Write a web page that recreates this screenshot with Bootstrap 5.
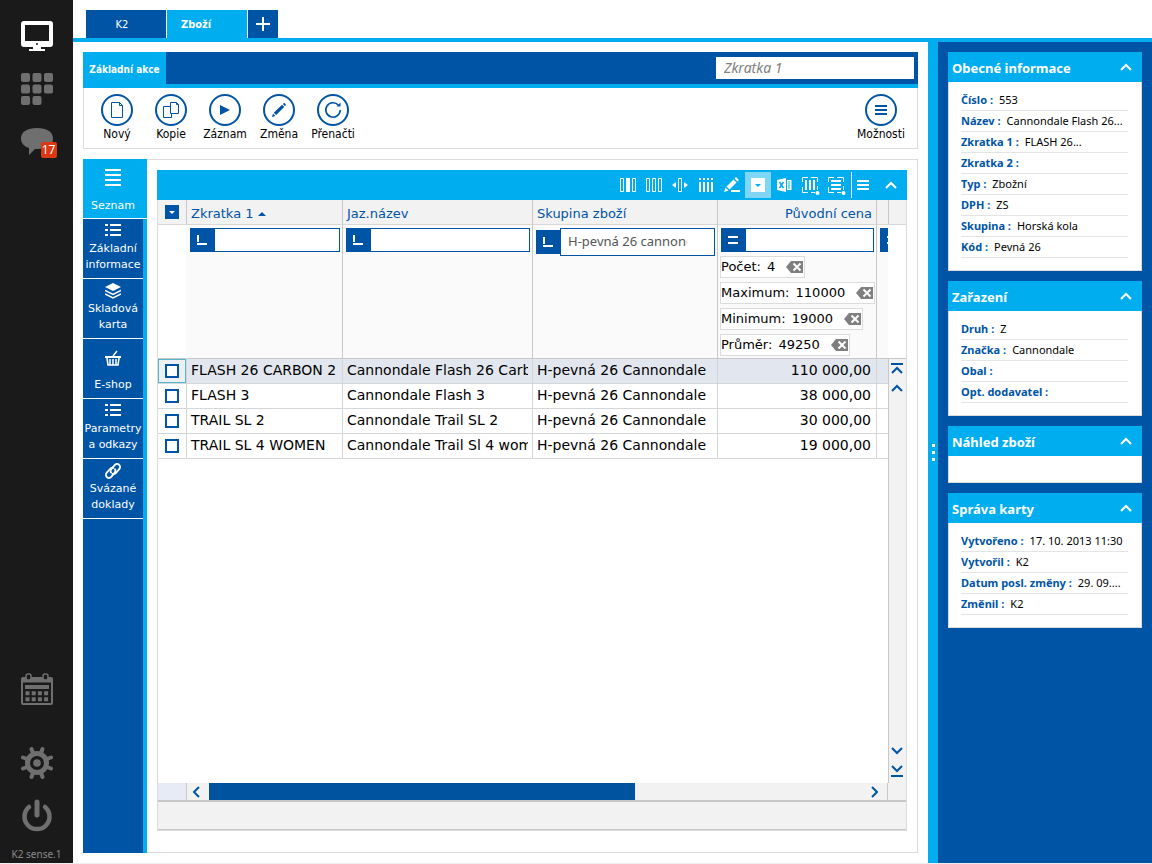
<!DOCTYPE html>
<html lang="cs">
<head>
<meta charset="utf-8">
<meta name="viewport" content="width=device-width, initial-scale=1">
<title>K2 – Zboží</title>
<link href="https://cdn.jsdelivr.net/npm/bootstrap@5.3.0/dist/css/bootstrap.min.css" rel="stylesheet">
<style>
:root{--navy:#0054a6;--sky:#00adef;--rule:#dcdcdc;--pale:#f2f2f2;
  --verdana:Verdana,"DejaVu Sans",sans-serif;--tahoma:"DejaVu Sans Condensed",sans-serif;--segoe:"Noto Sans",sans-serif}
body{font-family:var(--verdana);font-size:13px;color:#000;line-height:16px;padding-bottom:1px;background:#eee}
svg{display:block}
button{border:0;background:none;padding:0;color:inherit;border-radius:0}
a{text-decoration:none;color:inherit}
.bg-navy{background:var(--navy)}
.bg-sky{background:var(--sky)}
.shrinkable{min-width:0;min-height:0}
.rail{width:73px;background:#1a1a1a;color:#6f6f6f;padding:20px 0 1px}
.rail .note{font:10px/16px var(--segoe);color:#8a8a8a;margin-top:14px}
.rail .settings{margin:42px 0 20px}
.count{right:-4px;bottom:-2px;width:16px;height:16px;background:#dc3912;color:#fff;font:12px/16px var(--segoe);border-radius:2px;text-align:center}
.tabs{height:42px;padding:10px 0 0 13px;border-bottom:4px solid var(--sky);gap:1px;flex:none}
.tabs a,.tabs button{font:11px/30px var(--tahoma);color:#fff;background:var(--navy);width:80px;height:28px}
.tabs a{padding-right:8px}
.tabs a.active{background:var(--sky);font-weight:bold;padding-left:14px}
.tabs button{width:30px}
.work{padding:10px}
.actions-head{height:36px;border-bottom:4px solid var(--sky)}
.actions-head a{background:var(--sky);color:#fff;font:bold 10px/36px var(--tahoma);height:36px;width:83px;text-align:center}
.find{width:198px;height:22px;border:0;font:italic 14px/20px var(--segoe);padding:0 8px 2px;margin:5px 4px 0 0;border-radius:0}
.find::placeholder{color:#808080}
.actions{border:1px solid var(--rule);border-top:0;padding:6px 9px 6px 6px;margin-bottom:10px}
.actions button{width:54px;font:12px/16px var(--tahoma)}
.ring{width:32px;height:32px;border:2px solid var(--navy);border-radius:50%;color:var(--navy)}
.side{width:64px;border-right:4px solid var(--sky);background:var(--navy)}
.side a{height:60px;border-bottom:1px solid #fff;color:#fff;font-size:11px;line-height:16px;padding:4px 0 5px;text-align:center}
.side a.active{background:var(--sky);margin-right:-4px;padding:10px 4px 4px 0}
.pane{border:1px solid var(--rule);border-left:0;padding:10px 10px 21px}
.tools{height:30px;color:#fff}
.tools button{width:26px;height:26px}
.tools .on{background:#7fd6f7}
.tools .last{border-left:1px solid #fff;width:22px;margin-left:2px}
.tools .fold{width:34px;padding-left:2px}
.gridbox{border:1px solid var(--rule);border-top:0}
table.list{table-layout:fixed;width:100%;border-collapse:separate;border-spacing:0;white-space:nowrap;color:#000}
.list th,.list td{overflow:hidden;border-right:1px solid #d4d7da;border-bottom:1px solid #d4d7da;padding:0 4px}
.list tr>:last-child{border-right:0}
.list thead th{height:25px;background:var(--pale);color:var(--navy);font-weight:normal;border-color:#c8c8c8;border-bottom-color:#d8d8d8;padding-top:3px}
.list thead th:first-child{padding-top:0}
.list .filters td{height:134px;vertical-align:top;background:#fafafa;padding:3px 2px 0 3px;border-color:#c8c8c8}
.list .filters td:first-child{background:#fff;border-right-color:#fafafa}
.list tbody.data td{height:25px;font-size:14px;line-height:22px;padding-bottom:2px}
.list td.num{text-align:right;padding-right:5px}
.list tr.sel td{background:#e2e7ef}
.list tbody.data td:first-child{padding:0}
.list tr.sel td.pick{background:#eceff3;box-shadow:inset 0 0 0 1px #55b6cc}
.tick{appearance:none;display:block;width:14px;height:14px;border:2px solid var(--navy);background:#fff;margin:0 auto}
.menu{width:14px;height:14px;background:var(--navy);color:#fff;margin:0 auto}
.op{width:24px;height:24px;background:var(--navy);color:#fff;flex:none}
.fbox{flex:1;min-width:0;height:24px;border:1px solid var(--navy);border-radius:0;padding:0 6px;background:#fff}
.fbox.tall{height:28px;font:13px/24px var(--segoe);color:#555;padding:0 27px 2px 7px}
.sum{width:fit-content;height:22px;background:#fff;border:1px solid var(--rule);gap:11px;padding:0 1px 0 0;margin:4px 0 0 -1px;line-height:20px}
.sum b{font-weight:normal;margin-left:2px}
.vbar{width:18px;flex:none;color:var(--navy)}
.vhead{height:25px;background:var(--pale);border-left:1px solid #c8c8c8;border-bottom:1px solid #d8d8d8}
.vgap{height:133px}
.vtrack{background:var(--pale);border-left:1px solid #c8c8c8;border-top:1px solid #c8c8c8;padding:4px 2px 6px 0}
.hbar{height:17px;background:var(--pale);color:var(--navy)}
.hbar .corner{width:29px;background:#e6ebf5;border-right:1px solid #c8c8c8}
.hbar button{width:22px;padding-right:4px}
.hbar .endcap{width:19px;border-left:1px solid #c8c8c8}
.thumb{width:65%;height:100%;background:#00549f}
.foot{height:30px;background:var(--pale);border-top:2px solid #c8c8c8;border-bottom:1px solid #c8c8c8}
.split{width:10px;color:#fff}
.info{width:214px;padding:10px}
.info section{background:#fff;margin-bottom:10px;border:1px solid var(--rule);border-top:0}
.info h2{font:bold 13px/28px var(--segoe);height:30px;color:#fff;background:var(--sky);margin:0 -1px;padding:2px 10px 0 4px}
.info h2 svg{margin-top:-2px}
.info dl{margin:0;padding:8px 13px 12px 12px;font:11px/20px var(--segoe)}
.info dl div{border-bottom:1px solid #e4e4e4;white-space:nowrap;overflow:hidden;text-overflow:ellipsis;height:21px}
.info dt{display:inline;font-weight:bold;color:var(--navy);margin-right:6px}
.info dd{display:inline;margin:0}
.info .blank{height:26px}
</style>
</head>
<body class="d-flex vh-100 overflow-hidden">

<nav class="rail d-flex flex-column align-items-center flex-shrink-0" aria-label="Hlavní">
  <a href="#" aria-label="Plocha" class="text-white"><svg width="32" height="32" viewBox="0 0 32 32" fill="currentColor"><path fill-rule="evenodd" d="M3 1h26a3 3 0 0 1 3 3v20a3 3 0 0 1-3 3H3a3 3 0 0 1-3-3V4a3 3 0 0 1 3-3zM4 5v16h24V5z"/><path d="M12 27h8v2h4v2H8v-2h4z"/><circle cx="16" cy="24" r="1" fill="#1a1a1a"/></svg></a>
  <a href="#" aria-label="Moduly" class="mt-3 pt-1"><svg width="32" height="33" viewBox="0 0 32 33" fill="currentColor"><rect x="0" y="1" width="9" height="9" rx="2"/><rect x="11.500" y="1" width="9" height="9" rx="2"/><rect x="23" y="1" width="9" height="9" rx="2"/><rect x="0" y="12.500" width="9" height="9" rx="2"/><rect x="11.500" y="12.500" width="9" height="9" rx="2"/><rect x="23" y="12.500" width="9" height="9" rx="2"/><rect x="0" y="24" width="9" height="9" rx="2"/><rect x="11.500" y="24" width="9" height="9" rx="2"/></svg></a>
  <a href="#" aria-label="Zprávy" class="mt-3 pt-1 position-relative"><svg width="32" height="31" viewBox="0 0 32 31" fill="currentColor"><path d="M16 3c9.500 0 16 3.500 16 10.500S25.500 24 16 24h-2l-6 6v-7C3 21.500 0 18 0 13.500 0 6.500 6.500 3 16 3z"/></svg><span class="count position-absolute">17</span></a>
  <a href="#" aria-label="Kalendář" class="mt-auto"><svg width="32" height="32" viewBox="0 0 32 32" fill="none" stroke="currentColor"><rect x="1" y="5" width="30" height="26" rx="1" stroke-width="2"/><path d="M1 7h30" stroke-width="5"/><rect x="5" y="1" width="5" height="6" rx="2" fill="#1a1a1a" stroke-width="1.500"/><rect x="22" y="1" width="5" height="6" rx="2" fill="#1a1a1a" stroke-width="1.500"/><path d="M4 14h24" stroke-width="4"/><path d="M4.500 20.200h24M4.500 26.200h24" stroke-width="4" stroke-dasharray="4 2.200"/></svg></a>
  <a href="#" aria-label="Nastavení" class="settings"><svg width="32" height="32" viewBox="0 0 32 32" fill="none" stroke="currentColor"><circle cx="16" cy="16" r="9.500" stroke-width="5"/><circle cx="16" cy="16" r="3.800" fill="currentColor" stroke="none"/><g stroke-width="4" stroke-linecap="round"><path d="M12 6l-1.500-4M20 6l1.500-4M12 26l-1.500 4M20 26l1.500 4M6 12l-4-1.500M6 20l-4 1.500M26 12l4-1.500M26 20l4 1.500"/></g></svg></a>
  <a href="#" aria-label="Odhlásit"><svg width="32" height="33" viewBox="0 0 32 33" fill="none" stroke="currentColor" stroke-width="4.500" stroke-linecap="round"><path d="M8 8a12.500 12.500 0 1 0 16 0"/><path d="M16 3v13" stroke-width="5"/></svg></a>
  <span class="note">K2 sense.1</span>
</nav>

<div class="d-flex flex-column flex-grow-1 bg-white shrinkable">
  <header class="tabs d-flex">
    <a href="#" class="text-center">K2</a>
    <a href="#" class="active">Zboží</a>
    <button type="button" class="d-flex align-items-center justify-content-center" aria-label="Nová záložka"><svg width="14" height="14" stroke="#fff" stroke-width="2"><path d="M7 0v14M0 7h14"/></svg></button>
  </header>

  <div class="d-flex flex-grow-1 shrinkable">
    <main class="work d-flex flex-column flex-grow-1 shrinkable">
      <div class="actions-head bg-navy d-flex justify-content-between">
        <a href="#">Základní akce</a>
        <input class="find" type="search" placeholder="Zkratka 1" aria-label="Zkratka 1">
      </div>
      <div class="actions d-flex">
        <button type="button"><span class="ring d-flex align-items-center justify-content-center mx-auto"><svg width="14" height="18" fill="none" stroke="currentColor"><path d="M1.500 1.500h8l3 3v12h-11zM9.500 1.500v3h3"/></svg></span>Nový</button>
        <button type="button"><span class="ring d-flex align-items-center justify-content-center mx-auto"><svg width="18" height="18" fill="none" stroke="currentColor"><path d="M8.500 1.500h6l2 2v9h-8zM14.500 1.500v2h2M8.500 5.500h-7v11h8v-4"/></svg></span>Kopie</button>
        <button type="button"><span class="ring d-flex align-items-center justify-content-center mx-auto"><svg width="10" height="12" fill="currentColor"><path d="M0 1l10 5-10 5z"/></svg></span>Záznam</button>
        <button type="button"><span class="ring d-flex align-items-center justify-content-center mx-auto"><svg width="16" height="16" fill="currentColor"><path d="M1 15l1-3.500L4.500 14zM2.800 10.700L11 2.800 13.200 5 5.200 13zM11.800 2l1.500-1.200L15 2.700 14 4.200z"/></svg></span>Změna</button>
        <button type="button"><span class="ring d-flex align-items-center justify-content-center mx-auto"><svg width="18" height="18" fill="none" stroke="currentColor" stroke-width="1.600"><path d="M14.500 4.300A7.200 7.200 0 1 0 16.200 9"/><path d="M12.500 5.500h4v-4z" fill="currentColor" stroke="none"/></svg></span>Přenačti</button>
        <button type="button" class="ms-auto"><span class="ring d-flex align-items-center justify-content-center mx-auto"><svg width="12" height="12" stroke="currentColor" stroke-width="2"><path d="M0 2h12M0 6h12M0 10h12"/></svg></span>Možnosti</button>
      </div>

      <div class="d-flex flex-grow-1 shrinkable">
        <nav class="side flex-shrink-0" aria-label="Záložky knihy">
          <a href="#" class="active d-flex flex-column align-items-center justify-content-between"><svg width="16" height="17" stroke="#fff" stroke-width="2"><path d="M0 1h16M0 6h16M0 11h16M0 16h16"/></svg>Seznam</a>
          <a href="#" class="d-flex flex-column align-items-center justify-content-between"><svg width="16" height="14" stroke="#fff" stroke-width="2"><path d="M0 2h3M5 2h11M0 7h3M5 7h11M0 12h3M5 12h11"/></svg><span>Základní<br>informace</span></a>
          <a href="#" class="d-flex flex-column align-items-center justify-content-between"><svg width="16" height="16" fill="#fff"><path d="M8 0l8 4-8 4-8-4z"/><path d="M0 7.500l8 4 8-4M0 11l8 4 8-4" fill="none" stroke="#fff" stroke-width="1.500"/></svg><span>Skladová<br>karta</span></a>
          <a href="#" class="d-flex flex-column align-items-center justify-content-between pt-2"><svg width="16" height="22" fill="none" stroke="#fff"><path d="M0 10h16" stroke-width="2"/><path d="M2 11l1 7h10l1-7" stroke-width="1.600"/><path d="M5 12v6M8 12v6M11 12v6" stroke-width="1.500"/><path d="M8 9l4-5" stroke-width="1.500"/></svg>E-shop</a>
          <a href="#" class="d-flex flex-column align-items-center justify-content-between"><svg width="16" height="14" stroke="#fff" stroke-width="2"><path d="M0 2h3M5 2h11M0 7h3M5 7h11M0 12h3M5 12h11"/></svg><span>Parametry<br>a odkazy</span></a>
          <a href="#" class="d-flex flex-column align-items-center justify-content-between"><svg width="16" height="16" fill="none" stroke="#fff" stroke-width="1.800" stroke-linecap="round"><path d="M6 9.500c-.8-1.300-.5-2.500.5-3.700L9.500 2.300c1.300-1.500 3.200-1.700 4.500-.6s1.500 3 .2 4.500L11 10c-1 1.200-2.200 1.400-3.500.8"/><path d="M10 6.200c.8 1.300.5 2.500-.5 3.700l-3 3.700c-1.300 1.500-3.200 1.700-4.500.6s-1.500-3-.2-4.500L5 6c1-1.200 2-1.500 3-1"/></svg><span>Svázané<br>doklady</span></a>
        </nav>

        <div class="pane flex-grow-1 d-flex flex-column shrinkable">
          <div class="tools bg-sky d-flex align-items-center justify-content-end" role="toolbar">
            <button type="button" aria-label="Šířka sloupce" class="d-flex align-items-center justify-content-center"><svg width="16" height="14" fill="none" stroke="#fff"><path d="M.5.5h3v13h-3zM12.500.5h3v13h-3z"/><path d="M6 0h4v14H6z" fill="#fff" stroke="none"/></svg></button>
            <button type="button" aria-label="Sloupce" class="d-flex align-items-center justify-content-center"><svg width="16" height="14" fill="none" stroke="#fff"><path d="M.5.5h3v13h-3zM6.500.5h3v13h-3zM12.500.5h3v13h-3z"/></svg></button>
            <button type="button" aria-label="Přizpůsobit" class="d-flex align-items-center justify-content-center"><svg width="16" height="14" fill="#fff"><path d="M6.500.5h3v13h-3z" fill="none" stroke="#fff"/><path d="M4 4v6L0 7zM12 4v6l4-3z"/></svg></button>
            <button type="button" aria-label="Součty" class="d-flex align-items-center justify-content-center"><svg width="16" height="14" stroke="#fff" stroke-width="2"><path d="M2 0v2M6 0v2M10 0v2M14 0v2M2 4v10M6 4v10M10 4v10M14 4v10"/></svg></button>
            <button type="button" aria-label="Upravit" class="d-flex align-items-center justify-content-center"><svg width="16" height="16" fill="#fff"><path d="M0 15l1.500-4.500 3 3zM2.500 9.500l7-7 3 3-7 7zM10.500 1.500L12 0l3 3-1.500 1.500zM7 13h9v2H7z"/></svg></button>
            <button type="button" aria-label="Filtr" class="on d-flex align-items-center justify-content-center"><svg width="14" height="14"><path d="M0 0h14v14H0z" fill="#fff"/><path d="M4 6h6L7 9z" fill="#00adef"/></svg></button>
            <button type="button" aria-label="Excel" class="d-flex align-items-center justify-content-center"><svg width="15" height="14" fill="#fff"><path d="M0 2l9-2v14l-9-2zM10 2h4.500v10H10z"/><path d="M2.500 4l4 6M6.500 4l-4 6" stroke="#00adef" stroke-width="1.500"/><path d="M12 3v8" stroke="#00adef"/></svg></button>
            <button type="button" aria-label="Uložit sloupce" class="d-flex align-items-center justify-content-center"><svg width="20" height="22" fill="none" stroke="#fff"><path d="M2.500 8V3.500H8M11 3.500h6.500V8M2.500 13v5.500H8M11 18.500h4M17.500 12v4"/><path d="M6 6v10M10 6v10M14 6v10" stroke-width="2"/><circle cx="17.500" cy="19" r="2" fill="#fff" stroke="none"/></svg></button>
            <button type="button" aria-label="Uložit řádky" class="d-flex align-items-center justify-content-center"><svg width="20" height="22" fill="none" stroke="#fff"><path d="M2.500 8V3.500H8M11 3.500h6.500V8M2.500 13v5.500H8M11 18.500h4M17.500 12v4"/><path d="M5 7h10M5 11h10M5 15h10" stroke-width="2"/><circle cx="17.500" cy="19" r="2" fill="#fff" stroke="none"/></svg></button>
            <button type="button" aria-label="Nabídka" class="last d-flex align-items-center justify-content-center"><svg width="14" height="12" stroke="#fff" stroke-width="2"><path d="M1 2h12M1 6h12M1 10h12"/></svg></button>
            <button type="button" aria-label="Sbalit" class="fold d-flex align-items-center justify-content-center"><svg width="12" height="8" fill="none" stroke="#fff" stroke-width="2"><path d="M1 7l5-5 5 5"/></svg></button>
          </div>

          <div class="gridbox flex-grow-1 d-flex flex-column">
            <div class="d-flex flex-grow-1">
              <div class="flex-grow-1 shrinkable">
                <table class="list">
                  <colgroup><col style="width:29px"><col style="width:156px"><col style="width:190px"><col style="width:185px"><col style="width:159px"><col></colgroup>
                  <thead>
                    <tr><th><button type="button" class="menu d-flex align-items-center justify-content-center" aria-label="Výběr"><svg width="6" height="3" fill="#fff"><path d="M0 0h6L3 3z"/></svg></button></th>
                    <th>Zkratka 1 <svg class="d-inline-block align-middle" width="8" height="5" fill="currentColor"><path d="M4 0l4 4H0z"/></svg></th><th>Jaz.název</th><th>Skupina zboží</th><th class="text-end">Původní cena</th><th></th></tr>
                  </thead>
                  <tbody>
                    <tr class="filters">
                      <td></td>
                      <td><div class="d-flex"><button type="button" class="op" aria-label="Začíná na"><svg width="24" height="24" fill="none" stroke="#fff" stroke-width="2"><path d="M8 7v7M7 16h10"/></svg></button><input class="fbox" aria-label="Filtr Zkratka 1"></div></td>
                      <td><div class="d-flex"><button type="button" class="op" aria-label="Začíná na"><svg width="24" height="24" fill="none" stroke="#fff" stroke-width="2"><path d="M8 7v7M7 16h10"/></svg></button><input class="fbox" aria-label="Filtr Jaz.název"></div></td>
                      <td><div class="d-flex align-items-center"><button type="button" class="op" aria-label="Začíná na"><svg width="24" height="24" fill="none" stroke="#fff" stroke-width="2"><path d="M8 7v7M7 16h10"/></svg></button><input class="fbox tall" aria-label="Filtr Skupina zboží" value="H-pevná 26 cannondale"></div></td>
                      <td><div class="d-flex"><button type="button" class="op" aria-label="Rovná se"><svg width="24" height="24" stroke="#fff" stroke-width="2"><path d="M7 9h10M7 15h10"/></svg></button><input class="fbox" aria-label="Filtr Původní cena"></div>
                        <div class="sum d-flex align-items-center"><span>Počet: <b>4</b></span><button type="button" aria-label="Zrušit"><svg width="17" height="12" viewBox="0 0 17 12"><path d="M5 0h12v12H5L0 6z" fill="#7f7f7f"/><path d="M7.500 2.500l7 7M14.500 2.500l-7 7" stroke="#fff" stroke-width="2"/></svg></button></div>
                        <div class="sum d-flex align-items-center"><span>Maximum: <b>110000</b></span><button type="button" aria-label="Zrušit"><svg width="17" height="12" viewBox="0 0 17 12"><path d="M5 0h12v12H5L0 6z" fill="#7f7f7f"/><path d="M7.500 2.500l7 7M14.500 2.500l-7 7" stroke="#fff" stroke-width="2"/></svg></button></div>
                        <div class="sum d-flex align-items-center"><span>Minimum: <b>19000</b></span><button type="button" aria-label="Zrušit"><svg width="17" height="12" viewBox="0 0 17 12"><path d="M5 0h12v12H5L0 6z" fill="#7f7f7f"/><path d="M7.500 2.500l7 7M14.500 2.500l-7 7" stroke="#fff" stroke-width="2"/></svg></button></div>
                        <div class="sum d-flex align-items-center"><span>Průměr: <b>49250</b></span><button type="button" aria-label="Zrušit"><svg width="17" height="12" viewBox="0 0 17 12"><path d="M5 0h12v12H5L0 6z" fill="#7f7f7f"/><path d="M7.500 2.500l7 7M14.500 2.500l-7 7" stroke="#fff" stroke-width="2"/></svg></button></div></td>
                      <td><button type="button" class="op d-block" aria-label="Rovná se"><svg width="24" height="24" stroke="#fff" stroke-width="2"><path d="M7 9h10M7 15h10"/></svg></button></td>
                    </tr>
                  </tbody>
                  <tbody class="data">
                    <tr class="sel"><td class="pick"><input type="checkbox" class="tick" aria-label="Označit FLASH 26"></td><td>FLASH 26 CARBON 2</td><td><div class="overflow-hidden">Cannondale Flash 26 Carbon</div></td><td>H-pevná 26 Cannondale</td><td class="num">110 000,00</td><td></td></tr>
                    <tr><td><input type="checkbox" class="tick" aria-label="Označit FLASH 3"></td><td>FLASH 3</td><td>Cannondale Flash 3</td><td>H-pevná 26 Cannondale</td><td class="num">38 000,00</td><td></td></tr>
                    <tr><td><input type="checkbox" class="tick" aria-label="Označit TRAIL SL 2"></td><td>TRAIL SL 2</td><td>Cannondale Trail SL 2</td><td>H-pevná 26 Cannondale</td><td class="num">30 000,00</td><td></td></tr>
                    <tr><td><input type="checkbox" class="tick" aria-label="Označit TRAIL SL 4"></td><td>TRAIL SL 4 WOMEN</td><td><div class="overflow-hidden">Cannondale Trail Sl 4 women</div></td><td>H-pevná 26 Cannondale</td><td class="num">19 000,00</td><td></td></tr>
                  </tbody>
                </table>
              </div>
              <div class="vbar d-flex flex-column">
                <div class="vhead"></div><div class="vgap"></div>
                <div class="vtrack flex-grow-1 d-flex flex-column align-items-center">
                  <button type="button" class="mb-2" aria-label="První"><svg width="12" height="12" fill="none" stroke="currentColor" stroke-width="2"><path d="M0 1h12M1 10l5-5 5 5"/></svg></button>
                  <button type="button" aria-label="Předchozí"><svg width="12" height="12" fill="none" stroke="currentColor" stroke-width="2"><path d="M1 8l5-5 5 5"/></svg></button>
                  <button type="button" class="mt-auto mb-2" aria-label="Další"><svg width="12" height="10" fill="none" stroke="currentColor" stroke-width="2"><path d="M1 1l5 5 5-5"/></svg></button>
                  <button type="button" aria-label="Poslední"><svg width="12" height="12" fill="none" stroke="currentColor" stroke-width="2"><path d="M1 1l5 5 5-5M0 11h12"/></svg></button>
                </div>
              </div>
            </div>
            <div class="hbar d-flex">
              <div class="corner"></div>
              <button type="button" class="d-flex align-items-center justify-content-center" aria-label="Vlevo"><svg width="8" height="12" fill="none" stroke="currentColor" stroke-width="2"><path d="M7 1L2 6l5 5"/></svg></button>
              <div class="flex-grow-1"><div class="thumb"></div></div>
              <button type="button" class="d-flex align-items-center justify-content-center" aria-label="Vpravo"><svg width="8" height="12" fill="none" stroke="currentColor" stroke-width="2"><path d="M2 1l5 5-5 5"/></svg></button>
              <div class="endcap"></div>
            </div>
            <div class="foot"></div>
          </div>
        </div>
      </div>
    </main>

    <div class="split bg-sky d-flex align-items-center justify-content-center flex-shrink-0"><svg width="3" height="17" fill="#fff"><path d="M0 0h3v3H0zM0 7h3v3H0zM0 14h3v3H0z"/></svg></div>

    <aside class="info bg-navy flex-shrink-0">
      <section><h2 class="d-flex justify-content-between align-items-center">Obecné informace<button type="button" aria-label="Sbalit"><svg width="12" height="8" fill="none" stroke="#fff" stroke-width="2"><path d="M1 7l5-5 5 5"/></svg></button></h2>
        <dl><div><dt>Číslo :</dt><dd>553</dd></div><div><dt>Název :</dt><dd>Cannondale Flash 26...</dd></div><div><dt>Zkratka 1 :</dt><dd>FLASH 26...</dd></div><div><dt>Zkratka 2 :</dt><dd></dd></div><div><dt>Typ :</dt><dd>Zbožní</dd></div><div><dt>DPH :</dt><dd>ZS</dd></div><div><dt>Skupina :</dt><dd>Horská kola</dd></div><div><dt>Kód :</dt><dd>Pevná 26</dd></div></dl></section>
      <section><h2 class="d-flex justify-content-between align-items-center">Zařazení<button type="button" aria-label="Sbalit"><svg width="12" height="8" fill="none" stroke="#fff" stroke-width="2"><path d="M1 7l5-5 5 5"/></svg></button></h2>
        <dl><div><dt>Druh :</dt><dd>Z</dd></div><div><dt>Značka :</dt><dd>Cannondale</dd></div><div><dt>Obal :</dt><dd></dd></div><div><dt>Opt. dodavatel :</dt><dd></dd></div></dl></section>
      <section><h2 class="d-flex justify-content-between align-items-center">Náhled zboží<button type="button" aria-label="Sbalit"><svg width="12" height="8" fill="none" stroke="#fff" stroke-width="2"><path d="M1 7l5-5 5 5"/></svg></button></h2><div class="blank"></div></section>
      <section><h2 class="d-flex justify-content-between align-items-center">Správa karty<button type="button" aria-label="Sbalit"><svg width="12" height="8" fill="none" stroke="#fff" stroke-width="2"><path d="M1 7l5-5 5 5"/></svg></button></h2>
        <dl><div><dt>Vytvořeno :</dt><dd>17. 10. 2013 11:30</dd></div><div><dt>Vytvořil :</dt><dd>K2</dd></div><div><dt>Datum posl. změny :</dt><dd>29. 09....</dd></div><div><dt>Změnil :</dt><dd>K2</dd></div></dl></section>
    </aside>
  </div>
</div>
<script src="https://cdn.jsdelivr.net/npm/bootstrap@5.3.0/dist/js/bootstrap.bundle.min.js"></script>
</body>
</html>
